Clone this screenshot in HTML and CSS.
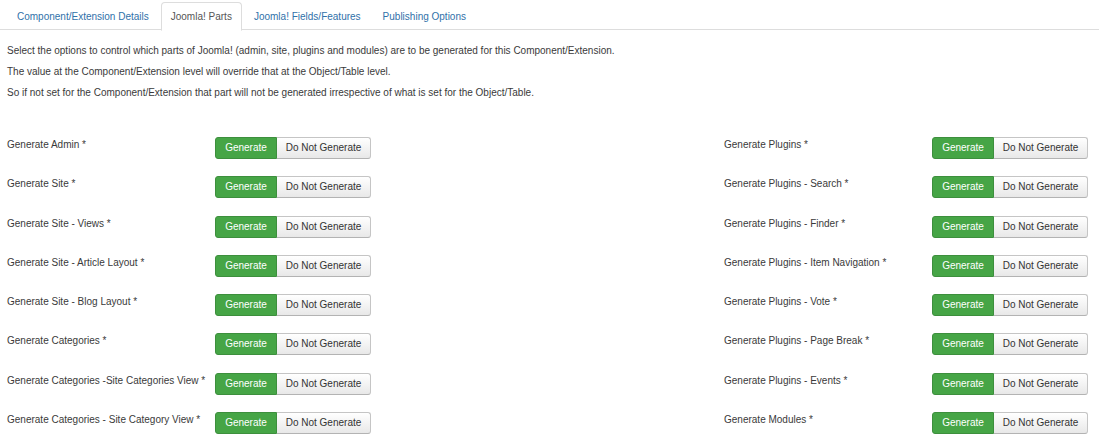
FILE: index.html
```html
<!DOCTYPE html>
<html>
<head>
<meta charset="utf-8">
<link rel="stylesheet" href="styles.css">
</head>
<body>
<div class="page">
  <ul class="tabs">
    <li class="tab">Component/Extension Details</li>
    <li class="tab active">Joomla! Parts</li>
    <li class="tab">Joomla! Fields/Features</li>
    <li class="tab">Publishing Options</li>
  </ul>
  <div class="intro">
    <p>Select the options to control which parts of Joomla! (admin, site, plugins and modules) are to be generated for this Component/Extension.</p>
    <p>The value at the Component/Extension level will override that at the Object/Table level.</p>
    <p>So if not set for the Component/Extension that part will not be generated irrespective of what is set for the Object/Table.</p>
  </div>
  <div class="columns">
    <div class="col">
      <div class="row"><span class="label">Generate Admin *</span><span class="toggle"><span class="btn on">Generate</span><span class="btn off">Do Not Generate</span></span></div>
      <div class="row"><span class="label">Generate Site *</span><span class="toggle"><span class="btn on">Generate</span><span class="btn off">Do Not Generate</span></span></div>
      <div class="row"><span class="label">Generate Site - Views *</span><span class="toggle"><span class="btn on">Generate</span><span class="btn off">Do Not Generate</span></span></div>
      <div class="row"><span class="label">Generate Site - Article Layout *</span><span class="toggle"><span class="btn on">Generate</span><span class="btn off">Do Not Generate</span></span></div>
      <div class="row"><span class="label">Generate Site - Blog Layout *</span><span class="toggle"><span class="btn on">Generate</span><span class="btn off">Do Not Generate</span></span></div>
      <div class="row"><span class="label">Generate Categories *</span><span class="toggle"><span class="btn on">Generate</span><span class="btn off">Do Not Generate</span></span></div>
      <div class="row"><span class="label">Generate Categories -Site Categories View *</span><span class="toggle"><span class="btn on">Generate</span><span class="btn off">Do Not Generate</span></span></div>
      <div class="row"><span class="label">Generate Categories - Site Category View *</span><span class="toggle"><span class="btn on">Generate</span><span class="btn off">Do Not Generate</span></span></div>
    </div>
    <div class="col">
      <div class="row"><span class="label">Generate Plugins *</span><span class="toggle"><span class="btn on">Generate</span><span class="btn off">Do Not Generate</span></span></div>
      <div class="row"><span class="label">Generate Plugins - Search *</span><span class="toggle"><span class="btn on">Generate</span><span class="btn off">Do Not Generate</span></span></div>
      <div class="row"><span class="label">Generate Plugins - Finder *</span><span class="toggle"><span class="btn on">Generate</span><span class="btn off">Do Not Generate</span></span></div>
      <div class="row"><span class="label">Generate Plugins - Item Navigation *</span><span class="toggle"><span class="btn on">Generate</span><span class="btn off">Do Not Generate</span></span></div>
      <div class="row"><span class="label">Generate Plugins - Vote *</span><span class="toggle"><span class="btn on">Generate</span><span class="btn off">Do Not Generate</span></span></div>
      <div class="row"><span class="label">Generate Plugins - Page Break *</span><span class="toggle"><span class="btn on">Generate</span><span class="btn off">Do Not Generate</span></span></div>
      <div class="row"><span class="label">Generate Plugins - Events *</span><span class="toggle"><span class="btn on">Generate</span><span class="btn off">Do Not Generate</span></span></div>
      <div class="row"><span class="label">Generate Modules *</span><span class="toggle"><span class="btn on">Generate</span><span class="btn off">Do Not Generate</span></span></div>
    </div>
  </div>
</div>
</body>
</html>
```

FILE: styles.css
```css
* { box-sizing: border-box; }
html, body { margin: 0; padding: 0; background: #fff; }
body {
  font-family: "Liberation Sans", Arial, sans-serif;
  font-size: 10px;
  color: #3a3a3a;
}
.page { width: 1100px; }
.tabs {
  list-style: none;
  margin: 0 1px 0 0;
  padding: 0 0 0 7px;
  display: flex;
  border-bottom: 1px solid #ddd;
  height: 30px;
}
.tab {
  padding: 0 9px;
  height: 28px;
  margin-top: 2px;
  line-height: 28px;
  color: #3071a9;
  border: 1px solid transparent;
  border-radius: 4px 4px 0 0;
  margin-right: 2px;
}
.tab.active {
  color: #555;
  background: #fff;
  border-color: #ddd #ddd transparent;
  height: 29px;
}
.intro { padding: 10px 0 0 7px; }
.intro p { margin: 0; line-height: 21px; }
.columns {
  display: grid;
  grid-template-columns: 717px 1fr;
  padding: 34px 0 0 7px;
}
.row {
  display: flex;
  align-items: flex-start;
  height: 39.3px;
}
.label {
  width: 208px;
  flex: none;
  line-height: 14px;
  padding-top: 1px;
}
.toggle {
  display: flex;
}
.btn {
  height: 22px;
  line-height: 20px;
  border: 1px solid #ccc;
  text-align: center;
}
.btn.on {
  width: 62px;
  background: #46a546;
  border-color: #3d8f3d;
  color: #fff;
  border-radius: 3px 0 0 3px;
}
.btn.off {
  width: 94px;
  border-left: 0;
  background: linear-gradient(#ffffff, #e8e8e8);
  border-color: #c5c5c5 #c5c5c5 #b3b3b3;
  color: #333;
  border-radius: 0 3px 3px 0;
}
```
